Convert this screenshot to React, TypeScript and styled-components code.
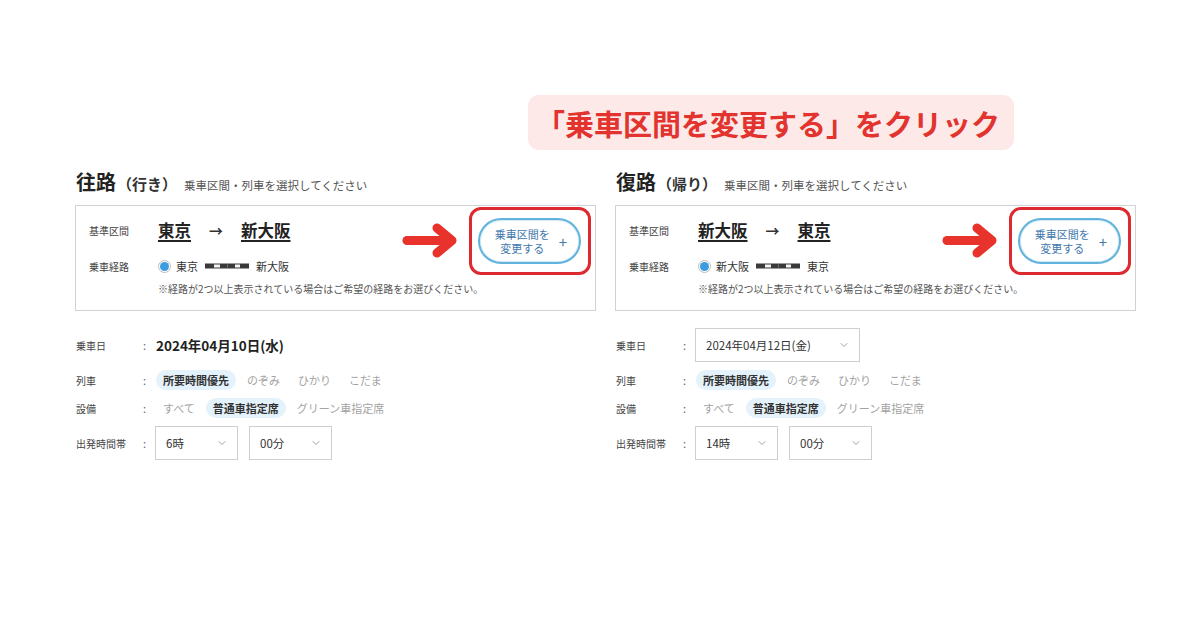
import React from 'react';
import styled, { createGlobalStyle } from 'styled-components';
import { ChevronDown } from 'lucide-react';

const GlobalStyle = createGlobalStyle`
  body {
    margin: 0;
    background: #fff;
    font-family: "Noto Sans CJK JP", "Noto Sans", sans-serif;
    color: #333;
  }
`;

const Page = styled.div`
  width: 1200px;
  height: 630px;
  padding-top: 95px;
  box-sizing: border-box;
`;

const Banner = styled.div`
  margin-left: 528px;
  width: 486px;
  height: 55px;
  box-sizing: border-box;
  background: #fce9e8;
  border-radius: 11px;
  display: flex;
  align-items: center;
  padding-left: 8px;
  color: #e2332e;
  font-size: 29px;
  font-weight: 700;
  white-space: nowrap;
`;

const Columns = styled.div`
  display: flex;
  gap: 19px;
  padding-left: 75px;
  margin-top: 19px;
`;

const Column = styled.section`
  width: 521px;
`;

const Heading = styled.div`
  display: flex;
  align-items: baseline;
  height: 26px;
  padding-left: 1px;
  margin-bottom: 10px;
`;

const Title = styled.h2`
  margin: 0;
  font-size: 20px;
  line-height: 26px;
  font-weight: 700;
  color: #222;
`;

const Sub = styled.span`
  font-size: 15px;
  font-weight: 700;
  color: #333;
  margin-left: 1px;
`;

const Hint = styled.span`
  font-size: 11.5px;
  color: #555;
  margin-left: 7px;
`;

const Box = styled.div`
  height: 106px;
  box-sizing: border-box;
  border: 1px solid #d2d2d2;
  padding: 12px 14px 0 13px;
  display: flex;
  justify-content: space-between;
`;

const Info = styled.div`
  display: flex;
  flex-direction: column;
  flex: 1;
  min-width: 0;
`;

const InfoRow = styled.div<{ $gap?: number }>`
  display: flex;
  align-items: center;
  height: 24px;
  margin-top: ${p => p.$gap ?? 0}px;
`;

const SmallLabel = styled.span`
  width: 69px;
  font-size: 10px;
  color: #444;
  flex-shrink: 0;
`;

const Station = styled.span`
  font-size: 16.5px;
  font-weight: 700;
  color: #222;
  text-decoration: underline;
  text-underline-offset: 3px;
  text-decoration-thickness: 1.5px;
`;

const Arrow = styled.span`
  font-size: 14px;
  font-weight: 700;
  color: #333;
  margin: 0 18px;
`;

const Radio = styled.span`
  width: 13px;
  height: 13px;
  border-radius: 50%;
  border: 1px solid #bdbdbd;
  box-sizing: border-box;
  display: inline-flex;
  align-items: center;
  justify-content: center;
  margin: 0 5px 0 0;
  flex-shrink: 0;

  &::after {
    content: '';
    width: 9px;
    height: 9px;
    border-radius: 50%;
    background: #3d9be0;
  }
`;

const RouteText = styled.span`
  font-size: 11px;
  color: #333;
`;

const RouteLineSvg = styled.svg`
  margin: 0 7px 0 7px;
`;

const Note = styled.div`
  margin-top: 4px;
  padding-left: 69px;
  font-size: 10px;
  line-height: 14px;
  color: #555;
  white-space: nowrap;
`;

const ButtonWrap = styled.div`
  position: relative;
  align-self: flex-start;
  flex-shrink: 0;
`;

const ChangeButton = styled.button`
  width: 103px;
  height: 46px;
  box-sizing: border-box;
  border-radius: 23px;
  border: 2px solid #62b3dc;
  box-shadow: inset 0 0 0 1px #d3eaf6;
  background: #fff;
  display: flex;
  align-items: center;
  justify-content: flex-end;
  padding: 0 12px 0 0;
  gap: 9px;
  color: #3f78ae;
  font-family: inherit;
  cursor: pointer;
`;

const ButtonText = styled.span`
  display: flex;
  flex-direction: column;
  align-items: center;
  font-size: 11px;
  line-height: 14px;
  white-space: nowrap;
`;

const Plus = styled.span`
  font-size: 15px;
  color: #4a7aa8;
  line-height: 1;
`;

const Highlight = styled.div`
  position: absolute;
  left: -9px;
  top: -11px;
  right: -10px;
  bottom: -11px;
  border: 3px solid #dd2a30;
  border-radius: 12px;
  pointer-events: none;
`;

const PointArrow = styled.svg`
  position: absolute;
  right: calc(100% + 19px);
  top: 5px;
`;

const Fields = styled.div`
  margin-top: 17px;
  display: flex;
  flex-direction: column;
  gap: 8px;
`;

const Field = styled.div<{ $h: number }>`
  display: grid;
  grid-template-columns: 67px 13px 1fr;
  align-items: center;
  height: ${p => p.$h}px;
  padding-left: 1px;
`;

const FieldLabel = styled.span`
  font-size: 10px;
  color: #444;
`;

const Colon = styled.span`
  font-size: 11px;
  color: #666;
`;

const Value = styled.div`
  display: flex;
  align-items: center;
  gap: 12px;
`;

const DateText = styled.span`
  font-size: 13.5px;
  font-weight: 700;
  color: #222;
`;

const Select = styled.div<{ $w: number }>`
  width: ${p => p.$w}px;
  height: 34px;
  box-sizing: border-box;
  border: 1px solid #cfcfcf;
  display: flex;
  align-items: center;
  justify-content: space-between;
  padding: 0 9px 0 10px;
  font-size: 11.5px;
  color: #333;
  margin-left: -1px;
`;

const Options = styled.div`
  display: flex;
  align-items: center;
  gap: 4px;
`;

const Option = styled.span<{ $on?: boolean }>`
  height: 20px;
  line-height: 20px;
  padding: 0 7px;
  border-radius: 10px;
  font-size: 11px;
  font-weight: ${p => (p.$on ? 700 : 400)};
  color: ${p => (p.$on ? '#333' : '#a3a3a3')};
  background: ${p => (p.$on ? '#e4f2fb' : 'transparent')};
`;

const RouteLine = () => (
  <RouteLineSvg width="44" height="6" viewBox="0 0 44 6">
    <rect x="0" y="0.5" width="44" height="5" fill="#3a3a3a" />
    <rect x="9" y="1.5" width="6" height="3" fill="#f4f4f4" />
    <rect x="22" y="1.5" width="1" height="3" fill="#777" />
    <rect x="30" y="1.5" width="5" height="3" fill="#f4f4f4" />
  </RouteLineSvg>
);

interface Leg {
  title: string;
  sub: string;
  from: string;
  to: string;
  date: string;
  dateSelect: boolean;
  hour: string;
}

const legs: Leg[] = [
  { title: '往路', sub: '（行き）', from: '東京', to: '新大阪', date: '2024年04月10日(水)', dateSelect: false, hour: '6時' },
  { title: '復路', sub: '（帰り）', from: '新大阪', to: '東京', date: '2024年04月12日(金)', dateSelect: true, hour: '14時' },
];

const Chevron = () => <ChevronDown size={12} color="#888" strokeWidth={1.6} />;

const LegPanel: React.FC<{ leg: Leg }> = ({ leg }) => (
  <Column>
    <Heading>
      <Title>{leg.title}</Title>
      <Sub>{leg.sub}</Sub>
      <Hint>乗車区間・列車を選択してください</Hint>
    </Heading>
    <Box>
      <Info>
        <InfoRow>
          <SmallLabel>基準区間</SmallLabel>
          <Station>{leg.from}</Station>
          <Arrow>→</Arrow>
          <Station>{leg.to}</Station>
        </InfoRow>
        <InfoRow $gap={12}>
          <SmallLabel>乗車経路</SmallLabel>
          <Radio />
          <RouteText>{leg.from}</RouteText>
          <RouteLine />
          <RouteText>{leg.to}</RouteText>
        </InfoRow>
        <Note>※経路が2つ以上表示されている場合はご希望の経路をお選びください。</Note>
      </Info>
      <ButtonWrap>
        <PointArrow width="57" height="35" viewBox="0 0 57 35">
          <path d="M5 17.5 H46" stroke="#e8322c" strokeWidth="9" strokeLinecap="round" fill="none" />
          <path d="M35 5 L50 17.5 L35 30" stroke="#e8322c" strokeWidth="9" strokeLinecap="round" strokeLinejoin="round" fill="none" />
        </PointArrow>
        <ChangeButton>
          <ButtonText>
            <span>乗車区間を</span>
            <span>変更する</span>
          </ButtonText>
          <Plus>+</Plus>
        </ChangeButton>
        <Highlight />
      </ButtonWrap>
    </Box>
    <Fields>
      <Field $h={34}>
        <FieldLabel>乗車日</FieldLabel>
        <Colon>:</Colon>
        <Value>
          {leg.dateSelect ? (
            <Select $w={165}>
              <span>{leg.date}</span>
              <Chevron />
            </Select>
          ) : (
            <DateText>{leg.date}</DateText>
          )}
        </Value>
      </Field>
      <Field $h={20}>
        <FieldLabel>列車</FieldLabel>
        <Colon>:</Colon>
        <Options>
          <Option $on>所要時間優先</Option>
          <Option>のぞみ</Option>
          <Option>ひかり</Option>
          <Option>こだま</Option>
        </Options>
      </Field>
      <Field $h={20}>
        <FieldLabel>設備</FieldLabel>
        <Colon>:</Colon>
        <Options>
          <Option>すべて</Option>
          <Option $on>普通車指定席</Option>
          <Option>グリーン車指定席</Option>
        </Options>
      </Field>
      <Field $h={34}>
        <FieldLabel>出発時間帯</FieldLabel>
        <Colon>:</Colon>
        <Value>
          <Select $w={83}>
            <span>{leg.hour}</span>
            <Chevron />
          </Select>
          <Select $w={83}>
            <span>00分</span>
            <Chevron />
          </Select>
        </Value>
      </Field>
    </Fields>
  </Column>
);

export default function App() {
  return (
    <Page>
      <GlobalStyle />
      <Banner>「乗車区間を変更する」をクリック</Banner>
      <Columns>
        {legs.map(leg => (
          <LegPanel key={leg.title} leg={leg} />
        ))}
      </Columns>
    </Page>
  );
}
